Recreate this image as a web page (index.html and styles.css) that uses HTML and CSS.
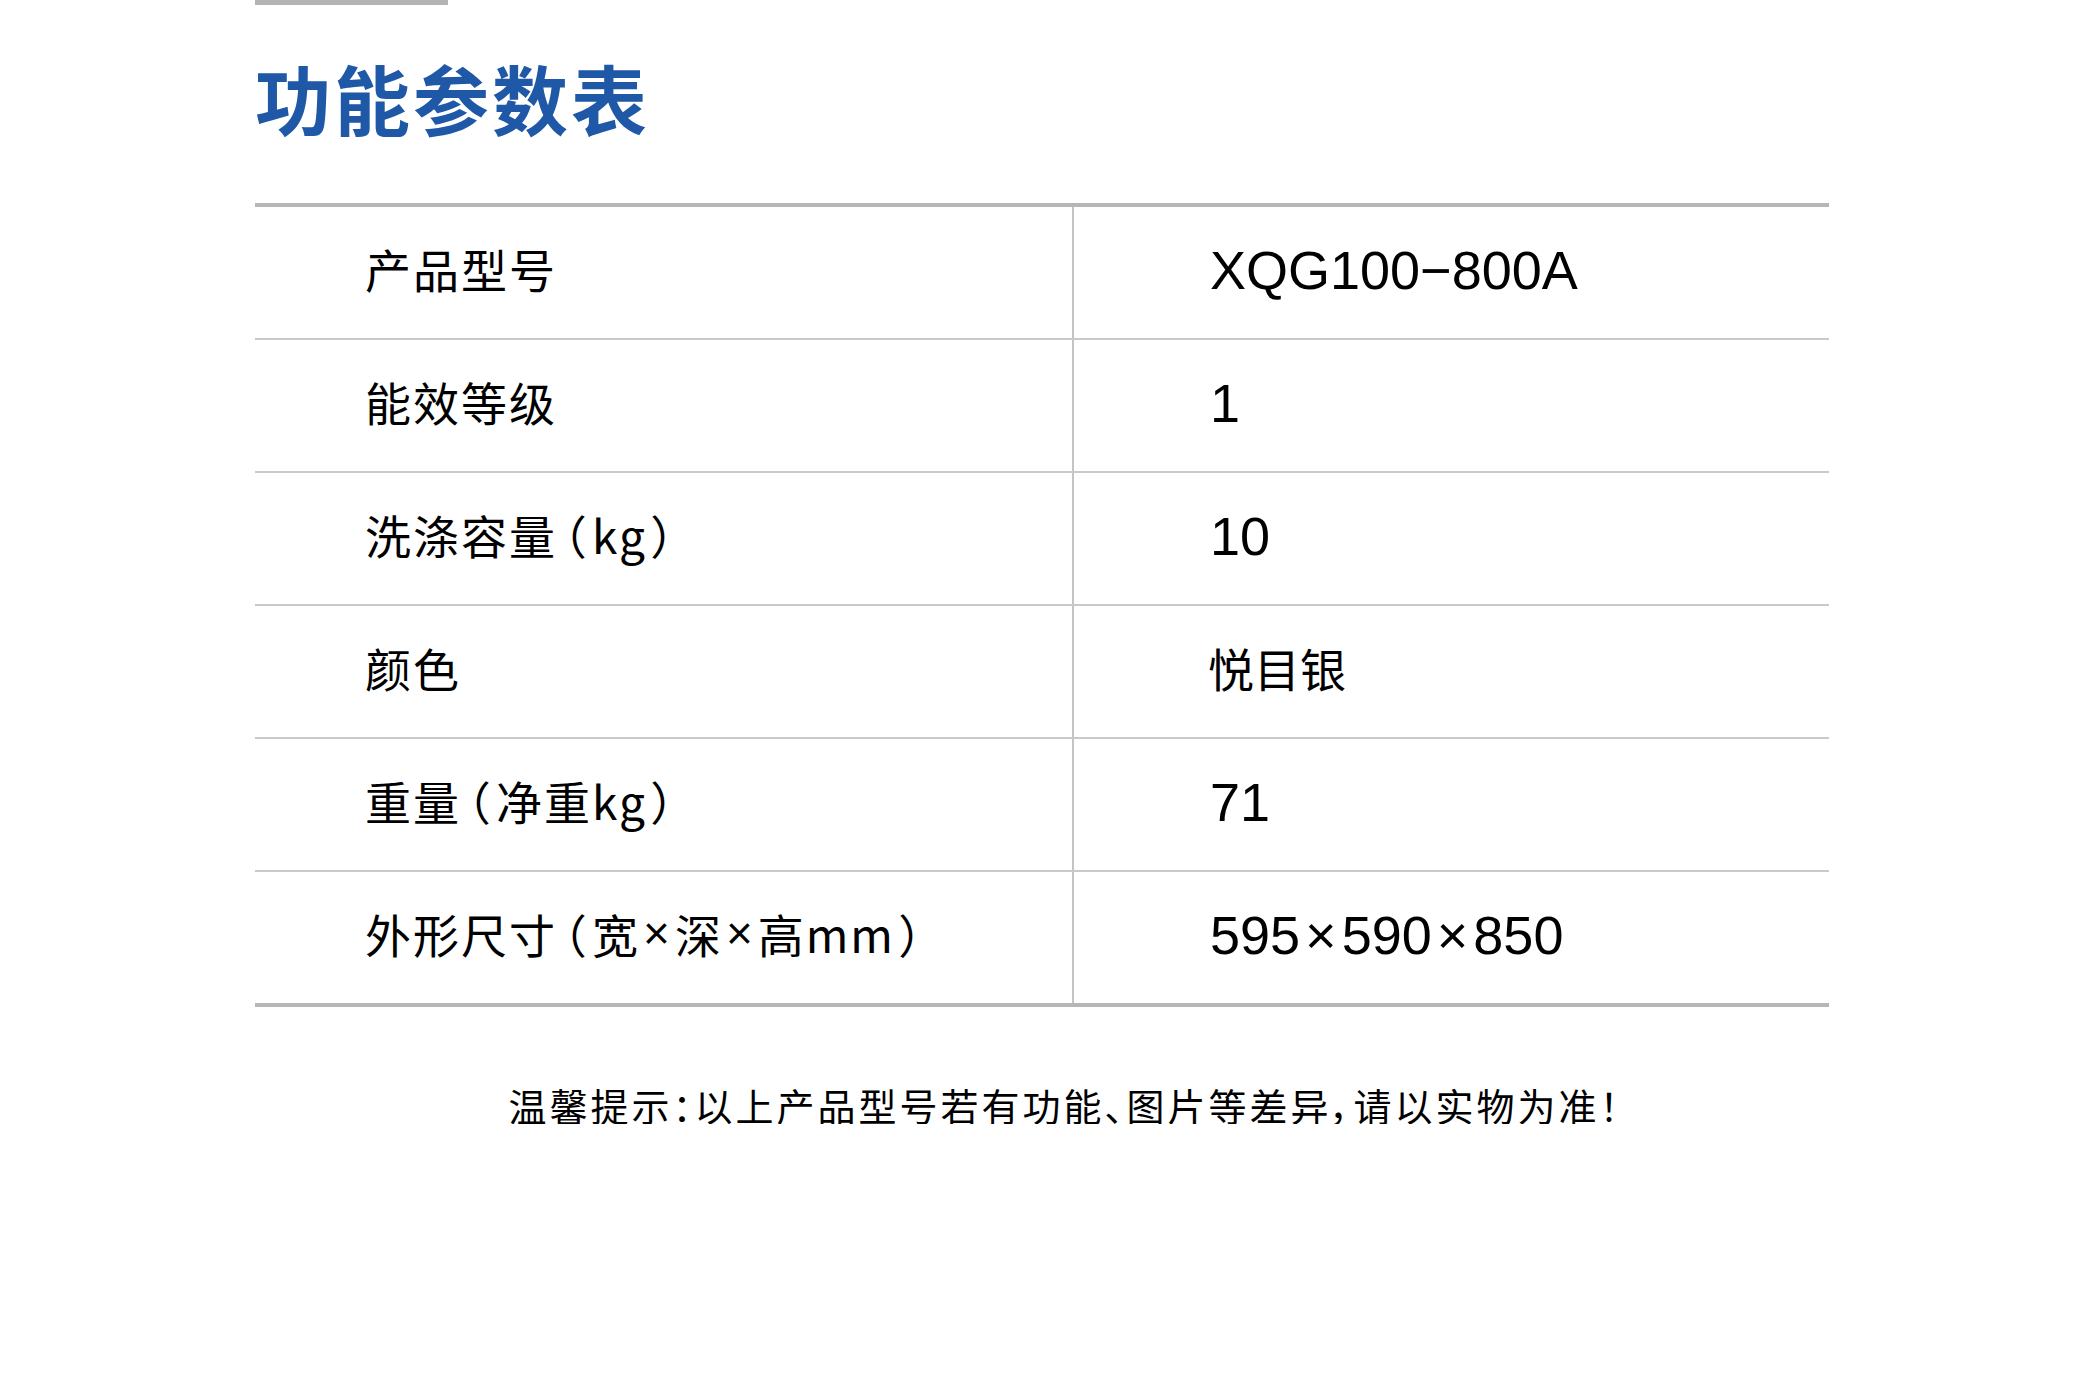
FILE: index.html
```html
<!DOCTYPE html>
<html lang="zh-CN">
<head>
<meta charset="utf-8">
<title>功能参数表</title>
<link rel="stylesheet" href="styles.css">
</head>
<body>
<div class="page">
  <div class="topbar"></div>
  <h1 class="title">功能参数表</h1>
  <div class="spec">
    <div class="row"><div class="label">产品型号</div><div class="value num">XQG100−800A</div></div>
    <div class="row"><div class="label">能效等级</div><div class="value num">1</div></div>
    <div class="row"><div class="label">洗涤容量<span class="paren">（</span>kg<span class="paren">）</span></div><div class="value num">10</div></div>
    <div class="row"><div class="label">颜色</div><div class="value cjk">悦目银</div></div>
    <div class="row"><div class="label">重量<span class="paren">（</span>净重kg<span class="paren">）</span></div><div class="value num">71</div></div>
    <div class="row"><div class="label">外形尺寸<span class="paren">（</span>宽<span class="times">×</span>深<span class="times">×</span>高mm<span class="paren">）</span></div><div class="value num">595<span class="times">×</span>590<span class="times">×</span>850</div></div>
  </div>
  <p class="note">温馨提示：以上产品型号若有功能、图片等差异，请以实物为准！</p>
</div>
</body>
</html>
```

FILE: styles.css
```css
html, body {
  margin: 0;
  padding: 0;
  background: #ffffff;
}

body {
  font-family: "Noto Sans CJK SC", "Noto Sans", sans-serif;
  color: #000000;
}

.page {
  width: 1574px;
  margin-left: 255px;
  display: flex;
  flex-direction: column;
}

.topbar {
  width: 193px;
  height: 5px;
  background: #b4b4b4;
}

.title {
  margin: 54px 0 0 0;
  font-size: 76px;
  line-height: 76px;
  font-weight: 700;
  letter-spacing: 3px;
  color: #1e58a7;
}

.spec {
  margin-top: 68px;
  border-top: 4px solid #b6b6b6;
  border-bottom: 4px solid #b6b6b6;
  display: flex;
  flex-direction: column;
}

.row {
  display: grid;
  grid-template-columns: 819px 1fr;
  height: 131px;
  border-bottom: 2px solid #c9c9c9;
}

.row:last-child {
  border-bottom: none;
}

.label {
  display: flex;
  align-items: center;
  padding-left: 110px;
  padding-bottom: 10px;
  font-size: 46px;
  line-height: 1;
  letter-spacing: 2px;
  font-feature-settings: "palt";
  border-right: 2px solid #c4c4c4;
}

.label .paren {
  margin: 0 5px;
}

.label .times {
  font-family: "Liberation Sans", sans-serif;
  margin: 0 3px;
}

.value {
  display: flex;
  align-items: center;
  padding-left: 136px;
  padding-bottom: 6px;
  line-height: 1;
}

.num {
  font-family: "Liberation Sans", "Noto Sans CJK SC", sans-serif;
  font-size: 54px;
}

.num .times {
  margin: 0 5px;
}

.cjk {
  font-size: 46px;
  padding-left: 134px;
  padding-bottom: 10px;
}

.note {
  margin: 79px 0 0 0;
  padding-left: 46px;
  text-align: center;
  font-size: 38px;
  line-height: 1;
  letter-spacing: 3px;
  font-feature-settings: "palt";
}
```
